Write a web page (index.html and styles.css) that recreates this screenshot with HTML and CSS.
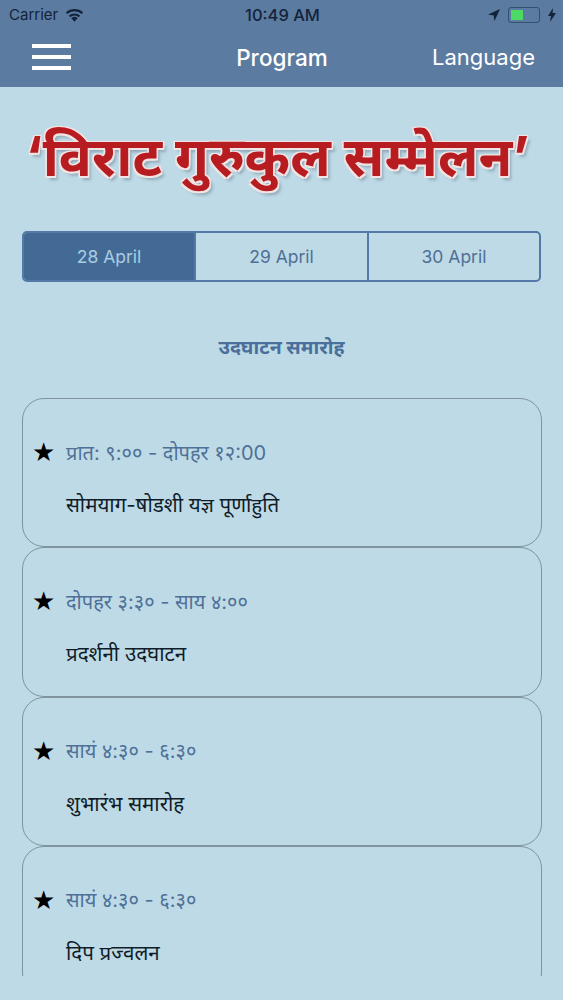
FILE: index.html
```html
<!DOCTYPE html>
<html lang="hi">
<head>
<meta charset="utf-8">
<title>Program</title>
<link rel="stylesheet" href="styles.css">
</head>
<body>
<div class="page">
  <header class="header">
    <div class="status">
      <div class="status-left">
        <span>Carrier</span>
        <svg class="wifi" viewBox="0 0 18 13" width="19" height="14"><path d="M9 13 6 9.600a4.400 4.400 0 0 1 6 0Z" fill="#13233a"/><path d="M4.300 7.800a7 7 0 0 1 9.400 0" fill="none" stroke="#13233a" stroke-width="2"/><path d="M1.500 4.800a11.200 11.200 0 0 1 15 0" fill="none" stroke="#13233a" stroke-width="2"/></svg>
      </div>
      <div class="status-time">10:49 AM</div>
      <div class="status-right">
        <svg viewBox="0 0 12 12" width="12" height="12"><path d="M12 0 0 5.500l5.600.9.900 5.600Z" fill="#13233a"/></svg>
        <div class="battery"><div class="battery-fill"></div></div>
        <svg viewBox="0 0 8 14" width="8" height="14"><path d="M5 0 0 8h3l-1 6 6-9H4.600Z" fill="#13233a"/></svg>
      </div>
    </div>
    <nav class="nav">
      <div class="burger"><span></span><span></span><span></span></div>
      <div class="nav-title">Program</div>
      <div class="nav-lang">Language</div>
    </nav>
  </header>
  <div class="banner">‘विराट गुरुकुल सम्मेलन’</div>
  <div class="tabs">
    <div class="tab active">28 April</div>
    <div class="tab">29 April</div>
    <div class="tab">30 April</div>
  </div>
  <h2 class="section">उदघाटन समारोह</h2>
  <div class="list">
    <div class="card">
      <div class="time"><span class="star">★</span><span>प्रात: ९:०० - दोपहर १२:00</span></div>
      <div class="name">सोमयाग-षोडशी यज्ञ पूर्णाहुति</div>
    </div>
    <div class="card">
      <div class="time"><span class="star">★</span><span>दोपहर ३:३० - साय ४:००</span></div>
      <div class="name">प्रदर्शनी उदघाटन</div>
    </div>
    <div class="card">
      <div class="time"><span class="star">★</span><span>सायं ४:३० - ६:३०</span></div>
      <div class="name">शुभारंभ समारोह</div>
    </div>
    <div class="card">
      <div class="time"><span class="star">★</span><span>सायं ४:३० - ६:३०</span></div>
      <div class="name">दिप प्रज्वलन</div>
    </div>
  </div>
</div>
</body>
</html>
```
FILE: styles.css
```css
* { box-sizing: border-box; }
html, body { margin: 0; padding: 0; }
body {
  width: 563px;
  height: 1000px;
  overflow: hidden;
  background: #bddae6;
  font-family: Inter, "Noto Sans", "Noto Sans Devanagari", sans-serif;
}
.page { height: 1000px; display: flex; flex-direction: column; }
.header { height: 87px; background: #5c7ba1; flex: none; }
.status {
  height: 29px;
  padding: 0 7px 0 9px;
  display: grid;
  grid-template-columns: 1fr auto 1fr;
  align-items: center;
  font-size: 15px;
  color: #13233a;
}
.status-left { display: flex; align-items: center; gap: 7px; }
.status-time { font-size: 16.500px; font-weight: 500; }
.status-right { display: flex; align-items: center; justify-content: flex-end; gap: 8px; }
.battery {
  width: 32px;
  height: 16px;
  border: 1px solid #33506f;
  border-radius: 3px;
  padding: 2px;
}
.battery-fill { width: 12px; height: 100%; background: #4cd964; }
.nav {
  height: 58px;
  padding: 0 28px 0 32px;
  display: grid;
  grid-template-columns: 1fr auto 1fr;
  align-items: center;
  color: #fff;
  font-size: 22px;
}
.burger { display: flex; flex-direction: column; gap: 7px; margin-top: -3px; }
.burger span { width: 39px; height: 4px; background: #fff; display: block; }
.nav-title { font-weight: 500; font-size: 22.500px; margin-top: -2px; margin-right: 3px; }
.nav-lang { text-align: right; margin-top: -2px; }
.banner {
  margin-top: 31px;
  height: 82px;
  padding-right: 8px;
  text-align: center;
  white-space: nowrap;
  font-size: 55px;
  line-height: 76px;
  font-weight: 700;
  color: #b71c20;
  text-shadow: 1.500px 1.500px 0 #f3e4e4, -1.500px -1.500px 0 #f3e4e4, 1.500px -1.500px 0 #f3e4e4, -1.500px 1.500px 0 #f3e4e4, 3px 4px 3px rgba(60, 80, 100, .35);
}
.tabs {
  margin: 31px 22px 0;
  height: 51px;
  display: grid;
  grid-template-columns: 170px 173px 1fr;
  border: 2px solid #5479a6;
  border-radius: 5px;
  overflow: hidden;
  flex: none;
}
.tab {
  display: flex;
  align-items: center;
  justify-content: center;
  font-size: 17.500px;
  color: #4f6f94;
  border-left: 2px solid #5479a6;
}
.tab.active { background: #436a94; color: #a9cde3; border-left: 0; }
.section {
  margin: 50px 0 0;
  height: 30px;
  text-align: center;
  font-size: 19.500px;
  line-height: 30px;
  font-weight: 700;
  color: #4b6f9b;
}
.list {
  margin: 36px 21px 0 22px;
  height: 578px;
  overflow: hidden;
  flex: none;
}
.card {
  height: 149.300px;
  border: 1px solid #7f949f;
  border-radius: 22px;
  padding: 35px 10px 0 9px;
}
.time {
  display: flex;
  align-items: center;
  gap: 12px;
  height: 36px;
  font-size: 20px;
  color: #4f7097;
}
.star { width: 22px; color: #000; font-size: 26px; font-family: "DejaVu Sans", sans-serif; text-align: center; }
.name {
  margin: 17px 0 0 34px;
  height: 36px;
  line-height: 36px;
  font-size: 20.500px;
  color: #101c28;
}
```
